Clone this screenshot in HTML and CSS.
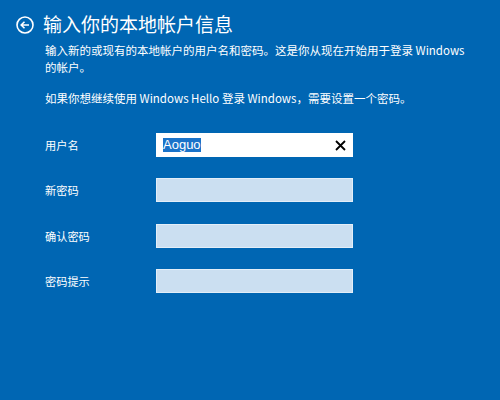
FILE: index.html
```html
<!DOCTYPE html>
<html lang="zh-CN">
<head>
    <meta charset="UTF-8">
    <title>输入你的本地帐户信息</title>
    <link rel="stylesheet" href="styles.css">
</head>
<body>
    <div class="page">
        <div class="header">
            <span class="back">
                <svg width="18" height="18" viewBox="0 0 18 18">
                    <circle cx="9" cy="9" r="8" fill="none" stroke="#fff" stroke-width="1.6"/>
                    <path d="M13 9H5.5M8.5 5.8L5.2 9l3.3 3.2" fill="none" stroke="#fff" stroke-width="1.6"/>
                </svg>
            </span>
            <h1>输入你的本地帐户信息</h1>
        </div>
        <div class="intro">
            <p>输入新的或现有的本地帐户的用户名和密码。这是你从现在开始用于登录 Windows 的帐户。</p>
            <p>如果你想继续使用 Windows Hello 登录 Windows，需要设置一个密码。</p>
        </div>
        <div class="form">
            <div class="row">
                <label>用户名</label>
                <div class="field active">
                    <span class="value">Aoguo</span>
                    <svg class="clear" width="11" height="11" viewBox="0 0 11 11">
                        <path d="M1 1L10 10M10 1L1 10" stroke="#000" stroke-width="1.8"/>
                    </svg>
                </div>
            </div>
            <div class="row">
                <label>新密码</label>
                <div class="field"></div>
            </div>
            <div class="row">
                <label>确认密码</label>
                <div class="field"></div>
            </div>
            <div class="row">
                <label>密码提示</label>
                <div class="field"></div>
            </div>
        </div>
    </div>
</body>
</html>
```

FILE: styles.css
```css
html, body {
    margin: 0;
    padding: 0;
    height: 100%;
}
body {
    background: #0066b3;
    color: #ffffff;
    font-family: "Noto Sans CJK SC", "Noto Sans", sans-serif;
}
.page {
    padding: 10px 0 0 16px;
}
.header {
    display: flex;
    align-items: center;
    gap: 9px;
    height: 28px;
}
.back {
    display: flex;
    margin-top: 1px;
}
h1 {
    margin: 0;
    font-size: 19px;
    font-weight: normal;
    line-height: 28px;
}
.intro {
    padding-left: 29px;
    margin-top: 4px;
    width: 420px;
}
.intro p {
    margin: 0 0 14px;
    font-size: 11.5px;
    line-height: 17px;
}
.form {
    padding-left: 29px;
    margin-top: 26px;
    display: flex;
    flex-direction: column;
    gap: 21.3px;
}
.row {
    display: flex;
    align-items: center;
    height: 24px;
}
label {
    width: 111px;
    font-size: 11.2px;
}
.field {
    box-sizing: border-box;
    width: 197px;
    height: 24px;
    background: #cbdff1;
    border: 1px solid #e3eef8;
    display: flex;
    align-items: center;
    justify-content: space-between;
    padding: 0 6px;
}
.field.active {
    background: #ffffff;
    border-color: #ffffff;
}
.value {
    font-family: "Liberation Sans", Arial, sans-serif;
    font-size: 13px;
    background: #1a73c9;
    color: #ffffff;
    line-height: 14px;
}
```
